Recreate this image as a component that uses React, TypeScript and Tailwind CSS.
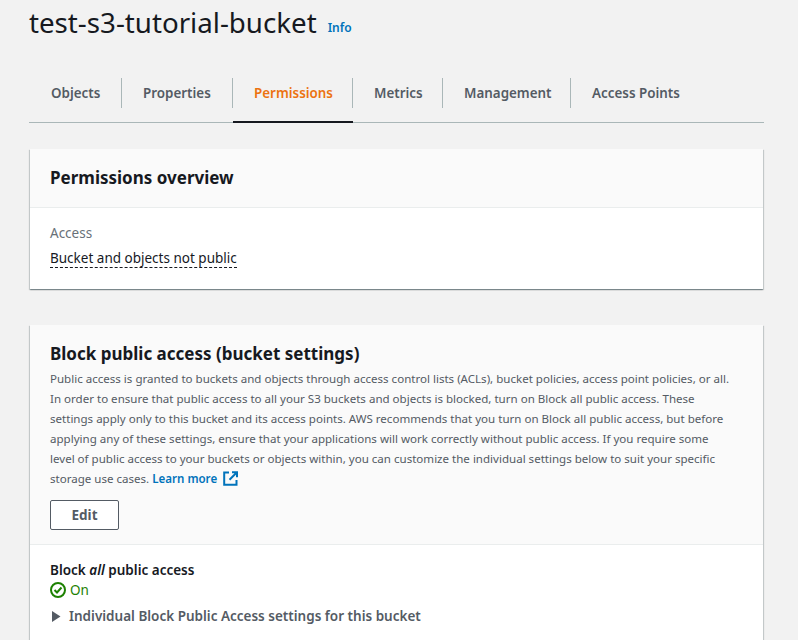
import React from 'react'

const tabs = [
  { label: 'Objects', width: 'w-[92px]' },
  { label: 'Properties', width: 'w-[111px]' },
  { label: 'Permissions', width: 'w-[120px]' },
  { label: 'Metrics', width: 'w-[90px]' },
  { label: 'Management', width: 'w-[128px]' },
  { label: 'Access Points', width: 'w-[128px]' },
]

const font = { fontFamily: '"Noto Sans", sans-serif' }

const cardShadow = 'shadow-[0_1px_1px_0_rgba(0,28,36,0.3),1px_1px_1px_0_rgba(0,28,36,0.15),-1px_1px_1px_0_rgba(0,28,36,0.15)]'

export default function App() {
  return (
    <div className="h-[640px] w-[798px] overflow-hidden bg-[#f2f2f2] pl-[29px] pr-[34px] text-[#16191f]" style={font}>
      <div className="flex h-[45px] items-center gap-[11px]">
        <h1 className="text-[27.7px] leading-[45px] font-normal">test-s3-tutorial-bucket</h1>
        <a className="mt-[10px] text-[12px] font-semibold text-[#0073bb]">Info</a>
      </div>

      {/* Tabs */}
      <div className="mt-[33px] flex h-[45px] border-b border-[#aab7b8] pl-px">
        {tabs.map((t, i) => (
          <div key={t.label} className={`flex h-[45px] items-start ${t.width} ${t.label === 'Permissions' ? 'border-b-[2px] border-[#16191f]' : ''}`}>
            <div className={`flex h-[30px] w-full items-center pl-[21px] text-[13.4px] font-semibold ${t.label === 'Permissions' ? 'text-[#ec7211]' : 'text-[#545b64]'} ${i < tabs.length - 1 ? 'border-r border-[#aab7b8]' : ''}`}>
              {t.label}
            </div>
          </div>
        ))}
      </div>

      {/* Permissions overview */}
      <section className={`mx-px mt-[26px] h-[140px] bg-white ${cardShadow}`}>
        <div className="flex h-[59px] items-center border-b border-[#eaeded] bg-[#fafafa] px-[20px]">
          <h2 className="text-[17px] font-bold">Permissions overview</h2>
        </div>
        <div className="px-[20px] pt-[15px]">
          <div className="text-[13.5px] leading-[20px] text-[#687078]">Access</div>
          <div className="mt-[4px] leading-[20px]">
            <span className="border-b border-dashed border-[#16191f] text-[13.5px]">Bucket and objects not public</span>
          </div>
        </div>
      </section>

      {/* Block public access */}
      <section className={`mx-px mt-[36px] h-[400px] bg-white ${cardShadow}`}>
        <div className="h-[220px] border-b border-[#eaeded] bg-[#fafafa] px-[20px] pt-[17px]">
          <h2 className="text-[17px] leading-[24px] font-bold">Block public access (bucket settings)</h2>
          <p className="mt-[3px] whitespace-nowrap text-[11.55px] leading-[20px] text-[#545b64]">
            Public access is granted to buckets and objects through access control lists (ACLs), bucket policies, access point policies, or all.<br />
            In order to ensure that public access to all your S3 buckets and objects is blocked, turn on Block all public access. These<br />
            settings apply only to this bucket and its access points. AWS recommends that you turn on Block all public access, but before<br />
            applying any of these settings, ensure that your applications will work correctly without public access. If you require some<br />
            level of public access to your buckets or objects within, you can customize the individual settings below to suit your specific<br />
            storage use cases.{' '}
            <a className="font-semibold text-[#0073bb]">Learn more</a>
            <svg className="ml-[6px] inline-block align-[-3px]" width="15" height="15" viewBox="0 0 15 15" fill="none" stroke="#0073bb" strokeWidth="2">
              <path d="M6 1.5H1.2v12.3h12.3V9" />
              <path d="M9 1.2h5v5M13.7 1.5 6.5 8.7" />
            </svg>
          </p>
          <button className="mt-[11px] h-[30px] w-[69px] rounded-[2px] border border-[#545b64] bg-white text-[13.5px] font-bold text-[#545b64]">Edit</button>
        </div>
        <div className="px-[20px] pt-[15px]">
          <div className="text-[13.5px] leading-[20px] font-semibold">
            Block <em>all</em> public access
          </div>
          <div className="flex h-[20px] items-center gap-[4px] text-[13.5px] text-[#1d8102]">
            <svg width="16" height="16" viewBox="0 0 16 16" fill="none" stroke="#1d8102" strokeWidth="2">
              <circle cx="8" cy="8" r="7" />
              <path d="M4.5 8 7 10.5 11.5 5.5" />
            </svg>
            On
          </div>
          <div className="mt-[6px] flex h-[20px] items-center gap-[6px] text-[13.5px] font-semibold text-[#545b64]">
            <svg width="13" height="13" viewBox="0 0 13 13" fill="#545b64">
              <path d="M2 1 10.5 6.5 2 12Z" />
            </svg>
            Individual Block Public Access settings for this bucket
          </div>
        </div>
      </section>
    </div>
  )
}
